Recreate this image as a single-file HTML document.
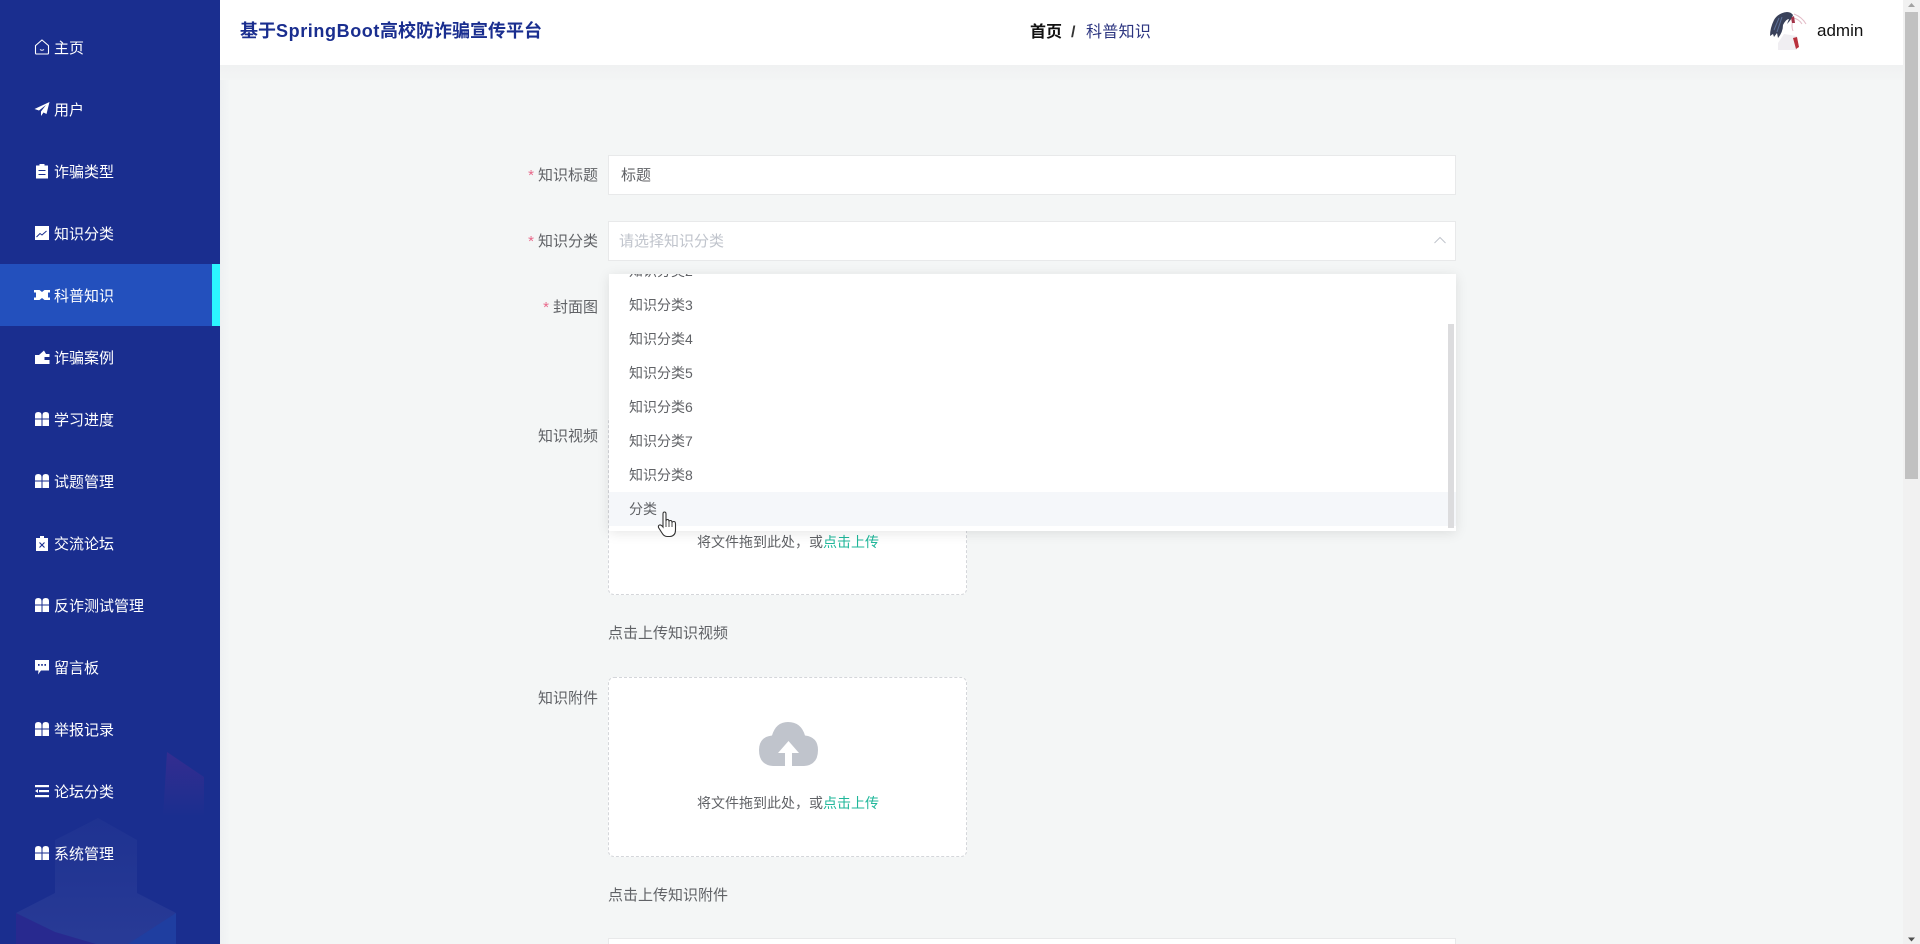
<!DOCTYPE html>
<html lang="zh">
<head>
<meta charset="utf-8">
<title>科普知识</title>
<style>
html,body{margin:0;padding:0;width:1920px;height:944px;overflow:hidden;background:#f4f6f6;}
body{position:relative;font-family:"Liberation Sans","WenQuanYi Zen Hei","Noto Sans CJK SC",sans-serif;font-size:14px;color:#606266;}
.a{position:absolute;white-space:nowrap;}
#side{position:absolute;left:0;top:0;width:220px;height:944px;background:#1a2e8f;overflow:hidden;}
.mi{position:absolute;left:0;width:220px;height:62px;line-height:62px;color:#fff;font-size:15px;}
.mi span{position:absolute;left:54px;top:2px;}
.mi svg{position:absolute;left:34px;top:23px;width:16px;height:16px;}
.act{background:#2350bd;}
.act i{position:absolute;right:0;top:0;width:8px;height:62px;background:#2cf5ff;}
.lb{position:absolute;text-align:right;width:120px;left:478px;height:20px;line-height:20px;font-size:15px;color:#606266;}
.lb b{font-weight:400;color:#e8688a;margin-right:4px;}
.inp{position:absolute;left:608px;width:846px;background:#fff;border:1px solid #e8e9ea;}
.up{position:absolute;left:608px;width:357px;height:178px;background:#fff;border:1px dashed #d4d6da;border-radius:6px;}
.opt{position:absolute;left:0;width:847px;height:34px;line-height:34px;padding-left:20px;box-sizing:border-box;font-size:14px;color:#606266;}
</style>
</head>
<body>
<div id="side">
<svg class="a" style="left:0;top:0" width="220" height="944">
<defs>
<linearGradient id="f" x1="0" y1="0" x2="0" y2="1"><stop offset="0" stop-color="#4a2c90" stop-opacity=".55"/><stop offset="1" stop-color="#4a2c90" stop-opacity="0"/></linearGradient>
<linearGradient id="g" x1="0" y1="0" x2="0" y2="1"><stop offset="0" stop-color="#2a3d96" stop-opacity=".3"/><stop offset="1" stop-color="#2f4099" stop-opacity=".7"/></linearGradient>
</defs>
<polygon points="167,752 204,777 204,817 163,817" fill="url(#f)"/>
<polygon points="98,818 137,840 137,893 176,913 176,944 16,944 16,913 55,893 55,840" fill="url(#g)"/>
<polygon points="16,913 55,932 96,944 16,944" fill="#28298f"/>
<polygon points="176,913 176,944 128,944" fill="#1f3ea0"/>
</svg>
<div class="mi" style="top:16px"><svg viewBox="0 0 16 16"><path d="M8 1 L14.500 6.600 V14 Q14.500 15 13.500 15 H2.500 Q1.500 15 1.500 14 V6.600 Z" fill="none" stroke="#fff" stroke-width="1.100"/><path d="M6 10.500 Q8 12 10 10.500" fill="none" stroke="#fff" stroke-width="1"/></svg><span>主页</span></div>
<div class="mi" style="top:78px"><svg viewBox="0 0 16 16"><path d="M15.500 1 L0.500 8 L5 9.500 L12 4 L7 10.500 L7 15 L9.500 11.500 L12.500 13 Z" fill="#fff"/></svg><span>用户</span></div>
<div class="mi" style="top:140px"><svg viewBox="0 0 16 16"><path d="M2 2.500 H5.500 V1 H10.500 V2.500 H14 V15.500 H2 Z" fill="#fff"/><path d="M4.500 7.500 H11.500 M4.500 11.500 H11.500" stroke="#1a2e8f" stroke-width="1.100"/></svg><span>诈骗类型</span></div>
<div class="mi" style="top:202px"><svg viewBox="0 0 16 16"><rect x="1" y="1" width="14" height="14" fill="#fff"/><path d="M2.500 12 L6 8.500 L8 10 L12.500 6" fill="none" stroke="#1a2e8f" stroke-width="1"/></svg><span>知识分类</span></div>
<div class="mi act" style="top:264px"><i></i><svg viewBox="0 0 16 16"><path d="M0 3 H16 V5.500 H14 V10.500 H16 V13 H0 V10.500 H2 V5.500 H0 Z" fill="#fff"/><path d="M5.500 3 L8 5 L10.500 3 Z M5.500 13 L8 11 L10.500 13 Z" fill="#2350bd"/></svg><span>科普知识</span></div>
<div class="mi" style="top:326px"><svg viewBox="0 0 16 16"><path d="M1 6 H5 L10 1.500 L12 5 H15.500 V15 H1 Z" fill="#fff"/><path d="M10.500 8 H16 V11 H10.500 Z" fill="#1a2e8f"/></svg><span>诈骗案例</span></div>
<div class="mi" style="top:388px"><svg viewBox="0 0 16 16"><g fill="#fff"><path d="M1 7.500 V4 Q1 1 4.250 1 Q7.500 1 7.500 4 V7.500 Z"/><path d="M8.500 7.500 V4 Q8.500 1 11.750 1 Q15 1 15 4 V7.500 Z"/><rect x="1" y="8.500" width="6.500" height="6.500"/><rect x="8.500" y="8.500" width="6.500" height="6.500"/></g></svg><span>学习进度</span></div>
<div class="mi" style="top:450px"><svg viewBox="0 0 16 16"><g fill="#fff"><path d="M1 7.500 V4 Q1 1 4.250 1 Q7.500 1 7.500 4 V7.500 Z"/><path d="M8.500 7.500 V4 Q8.500 1 11.750 1 Q15 1 15 4 V7.500 Z"/><rect x="1" y="8.500" width="6.500" height="6.500"/><rect x="8.500" y="8.500" width="6.500" height="6.500"/></g></svg><span>试题管理</span></div>
<div class="mi" style="top:512px"><svg viewBox="0 0 16 16"><path d="M2 3 H6 V1 H10 V3 H14 V16 H2 Z" fill="#fff"/><path d="M5.500 7.500 L10.500 12.500 M10.500 7.500 L5.500 12.500" stroke="#1a2e8f" stroke-width="1.100"/></svg><span>交流论坛</span></div>
<div class="mi" style="top:574px"><svg viewBox="0 0 16 16"><g fill="#fff"><path d="M1 7.500 V4 Q1 1 4.250 1 Q7.500 1 7.500 4 V7.500 Z"/><path d="M8.500 7.500 V4 Q8.500 1 11.750 1 Q15 1 15 4 V7.500 Z"/><rect x="1" y="8.500" width="6.500" height="6.500"/><rect x="8.500" y="8.500" width="6.500" height="6.500"/></g></svg><span>反诈测试管理</span></div>
<div class="mi" style="top:636px"><svg viewBox="0 0 16 16"><path d="M1 1 H15 V11.500 H7 L4 15.500 L4.500 11.500 H1 Z" fill="#fff"/><g fill="#1a2e8f"><rect x="4" y="5" width="1.600" height="1.800"/><rect x="7.200" y="5" width="1.600" height="1.800"/><rect x="10.400" y="5" width="1.600" height="1.800"/></g></svg><span>留言板</span></div>
<div class="mi" style="top:698px"><svg viewBox="0 0 16 16"><g fill="#fff"><path d="M1 7.500 V4 Q1 1 4.250 1 Q7.500 1 7.500 4 V7.500 Z"/><path d="M8.500 7.500 V4 Q8.500 1 11.750 1 Q15 1 15 4 V7.500 Z"/><rect x="1" y="8.500" width="6.500" height="6.500"/><rect x="8.500" y="8.500" width="6.500" height="6.500"/></g></svg><span>举报记录</span></div>
<div class="mi" style="top:760px"><svg viewBox="0 0 16 16"><g fill="#fff"><rect x="1" y="2" width="14" height="2.200"/><rect x="5" y="7" width="10" height="2.200"/><rect x="1" y="12" width="14" height="2.200"/><path d="M1 8 L4 6 V10 Z"/></g></svg><span>论坛分类</span></div>
<div class="mi" style="top:822px"><svg viewBox="0 0 16 16"><g fill="#fff"><path d="M1 7.500 V4 Q1 1 4.250 1 Q7.500 1 7.500 4 V7.500 Z"/><path d="M8.500 7.500 V4 Q8.500 1 11.750 1 Q15 1 15 4 V7.500 Z"/><rect x="1" y="8.500" width="6.500" height="6.500"/><rect x="8.500" y="8.500" width="6.500" height="6.500"/></g></svg><span>系统管理</span></div>
</div>

<!-- left edge shade of main -->
<div class="a" style="left:220px;top:65px;width:10px;height:879px;background:linear-gradient(90deg,#eef0f2,#f4f6f6);"></div>

<!-- header -->
<div class="a" style="left:220px;top:0;width:1683px;height:65px;background:#fff;"></div>
<div class="a" style="left:220px;top:65px;width:1683px;height:15px;background:linear-gradient(#f0f1f2,#f3f5f5);"></div>
<div class="a" style="left:240px;top:18px;height:26px;line-height:26px;font-size:18px;font-weight:700;color:#1a2e8f;font-family:'Liberation Sans','Noto Sans CJK SC',sans-serif;">基于<span style="letter-spacing:.6px">SpringBoot</span>高校防诈骗宣传平台</div>
<div class="a" style="left:1030px;top:22px;height:22px;line-height:22px;font-size:16px;font-weight:700;color:#111;font-family:'Liberation Sans','Noto Sans CJK SC',sans-serif;">首页</div>
<div class="a" style="left:1071px;top:22px;height:22px;line-height:22px;font-size:16px;color:#333;font-weight:700;">/</div>
<div class="a" style="left:1086px;top:22px;height:22px;line-height:22px;font-size:16px;letter-spacing:.3px;color:#2c3580;">科普知识</div>
<svg class="a" style="left:1767px;top:10px" width="40" height="40" viewBox="0 0 40 40" fill="none">
<path d="M17 24 L30 26 L30 40 L11 40 L11 33 Z" fill="#f0eef2"/>
<path d="M20 2 Q11 3 7 10 Q3 18 3 26 L6 24 L7 27 L10 23 L11 28 Q16 22 16 15 Q19 9 22 9 L20 14 Q25 9 26 5 Q24 2 20 2Z" fill="#39415a"/>
<path d="M12 8 L7 20 M15 7 L10 22" stroke="#5d7199" stroke-width="1"/>
<path d="M27 4 Q35 7 39 14 M26 8 Q32 9 35 14 M26 10 Q24 16 26 21" stroke="#e3bcc7" stroke-width="1"/>
<path d="M24 8 L27 6 L28 13 L25 13Z" fill="#a33347"/>
<path d="M26 28 L30 27 L32 37 L29 39 Z" fill="#b8303c"/>
</svg>
<div class="a" style="left:1817px;top:20px;height:22px;line-height:22px;font-size:17px;color:#111;">admin</div>

<!-- page scrollbar -->
<div class="a" style="left:1903px;top:0;width:17px;height:944px;background:#f1f1f1;"></div>
<div class="a" style="left:1905px;top:12px;width:13px;height:467px;background:#c1c1c1;"></div>
<svg class="a" style="left:1903px;top:0" width="17" height="12"><path d="M5 7 L8.500 3 L12 7 Z" fill="#a3a3a3"/></svg>
<svg class="a" style="left:1903px;top:934px" width="17" height="10"><path d="M5 3.500 L12 3.500 L8.500 7.500 Z" fill="#505050"/></svg>

<!-- form -->
<div class="lb" style="top:166px"><b>*</b>知识标题</div>
<div class="inp" style="top:155px;height:38px;"></div>
<div class="a" style="left:621px;top:166px;height:20px;line-height:20px;font-size:15px;color:#606266;">标题</div>

<div class="lb" style="top:232px"><b>*</b>知识分类</div>
<div class="inp" style="top:221px;height:38px;"></div>
<div class="a" style="left:619px;top:232px;height:20px;line-height:20px;font-size:15px;color:#c0c4cc;">请选择知识分类</div>
<svg class="a" style="left:1433px;top:234px" width="14" height="12"><path d="M1.500 9 L7 3.500 L12.500 9" fill="none" stroke="#c0c4cc" stroke-width="1"/></svg>

<div class="lb" style="top:298px"><b>*</b>封面图</div>
<div class="lb" style="top:427px">知识视频</div>

<div class="up" style="top:415px;"></div>
<div class="a" style="left:697px;top:532px;height:20px;line-height:20px;color:#606266;">将文件拖到此处，或<span style="color:#1fb79a">点击上传</span></div>
<div class="a" style="left:608px;top:624px;height:20px;line-height:20px;font-size:15px;color:#606266;">点击上传知识视频</div>

<!-- dropdown -->
<div class="a" style="left:609px;top:274px;width:847px;height:257px;background:#fff;box-shadow:0 2px 12px rgba(0,0,0,.1);overflow:hidden;">
<div class="opt" style="top:-20px">知识分类2</div>
<div class="opt" style="top:14px">知识分类3</div>
<div class="opt" style="top:48px">知识分类4</div>
<div class="opt" style="top:82px">知识分类5</div>
<div class="opt" style="top:116px">知识分类6</div>
<div class="opt" style="top:150px">知识分类7</div>
<div class="opt" style="top:184px">知识分类8</div>
<div class="opt" style="top:218px;background:#f5f7fa;">分类</div>
<div class="a" style="left:839px;top:50px;width:6px;height:204px;background:#dcdcde;"></div>
</div>
<svg class="a" style="left:657px;top:511px" width="22" height="27" viewBox="0 0 22 27"><path d="M6 14 V3 Q6 1 7.500 1 Q9 1 9 3 V10 Q9 8.500 10.500 8.500 Q12 8.500 12 10.500 Q12 9.500 13.500 9.500 Q15 9.500 15 11.500 Q15.500 10.500 17 10.500 Q18.500 10.500 18.500 13 V19 Q18.500 25 13 25.500 H10 Q7 25.500 5 22 L1.500 16.500 Q1 14.500 2.500 14 Q4 13.500 6 16 Z" fill="#fff" stroke="#333" stroke-width="1.100"/><path d="M9 10 V16 M12 10.500 V16 M15 11.500 V16" stroke="#333" stroke-width=".9"/></svg>

<div class="lb" style="top:689px">知识附件</div>
<div class="up" style="top:677px;"></div>
<svg class="a" style="left:759px;top:722px" width="59" height="44" viewBox="0 0 59 44"><path d="M14 44 Q0 43 0 28 Q0 15 13 13.500 Q17 0 29 0 Q42 0 46 13.500 Q59 15 59 28 Q59 43 45 44 Z" fill="#c0c4cc"/><path d="M29.500 19 L40 31 H33 V44 H26 V31 H19 Z" fill="#fff"/></svg>
<div class="a" style="left:697px;top:793px;height:20px;line-height:20px;color:#606266;">将文件拖到此处，或<span style="color:#1fb79a">点击上传</span></div>
<div class="a" style="left:608px;top:886px;height:20px;line-height:20px;font-size:15px;color:#606266;">点击上传知识附件</div>
<div class="inp" style="top:938px;height:30px;"></div>
</body>
</html>
